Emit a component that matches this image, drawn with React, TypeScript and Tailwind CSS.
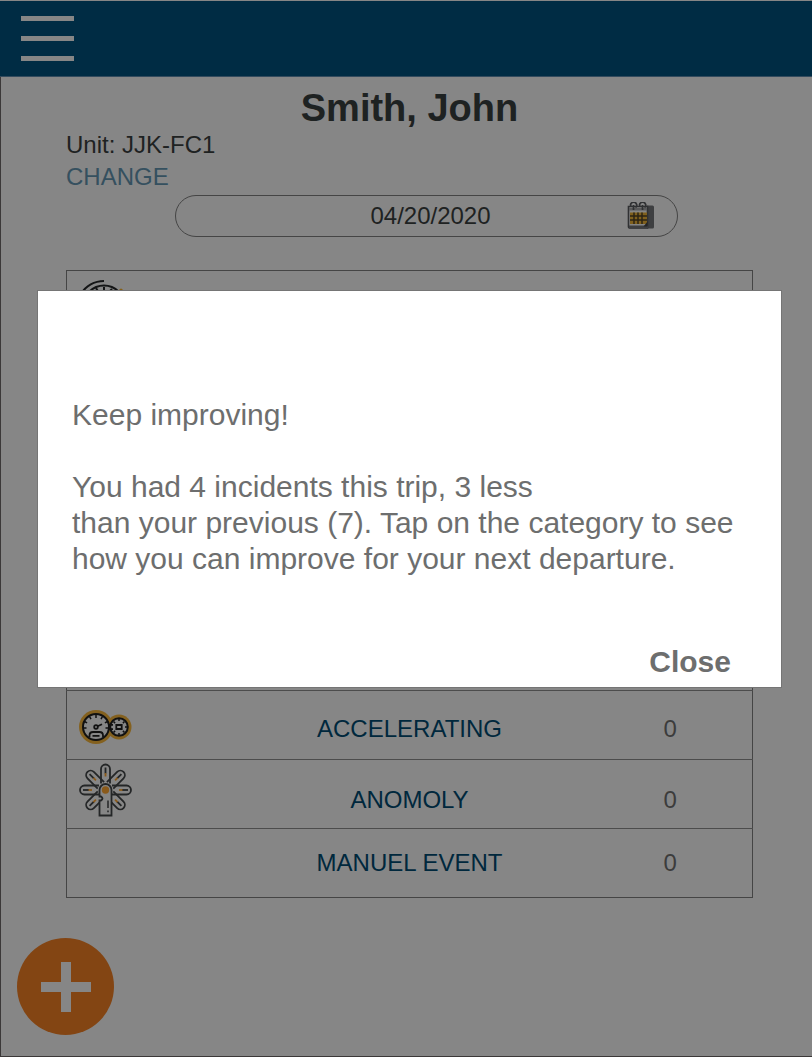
import { useState } from "react";
import type { ReactNode } from "react";

const SPOKES = [0, 45, 90, 135, 225, 270, 315];

function DialIcon() {
  return (
    <svg width="54" height="54" viewBox="0 0 54 54" fill="none" aria-hidden="true">
      <path d="M2 15A27 27 0 0 1 25 2" stroke="#141516" strokeWidth="2.200" />
      <circle cx="25" cy="27" r="20.500" stroke="#141516" strokeWidth="2.200" />
      <path d="M25 8v3M17 9l3 5M33 10l-2 2M11 13l4 4" stroke="#141516" strokeWidth="2" />
      <path d="M40 11q2-3 4 0v3h-3z" fill="#855f16" />
    </svg>
  );
}

function GaugesIcon() {
  return (
    <svg width="54" height="36" viewBox="0 0 54 36" fill="none" aria-hidden="true">
      <circle cx="17" cy="18" r="17" fill="#84611f" />
      <circle cx="40" cy="18" r="12.500" fill="#84611f" />
      <circle cx="40" cy="18" r="8.800" fill="#868686" stroke="#111" strokeWidth="2" />
      <circle cx="17" cy="18" r="13" fill="#868686" stroke="#111" strokeWidth="2" />
      <path
        d="M17 6v3M10.500 7.500l1.500 2.600M23.500 7.500l-1.500 2.600M5.500 12.500l2.600 1.300M28.500 12.500l-2.600 1.300M4.500 19h3M29.500 19h-3"
        stroke="#111"
        strokeWidth="1.500"
      />
      <circle cx="17" cy="18" r="1.800" stroke="#111" strokeWidth="1.800" />
      <path d="M18.500 17.300l4.500-2" stroke="#111" strokeWidth="1.800" />
      <path
        d="M10.500 28v-1.500q0-3.500 3.500-3.500h6.500q3.500 0 3.500 3.500V28M13.500 26.800h7"
        stroke="#111"
        strokeWidth="1.800"
      />
      <path d="M29 15.800h5M29 20.200h5" stroke="#111" strokeWidth="1.800" />
      <path
        d="M40 9.500v2.500M40 26.500V24M46 18h2.500M34.500 12.500l1.600 1.600M45.500 12.500l-1.600 1.600M34.500 23.500l1.600-1.600M45.500 23.500l-1.600-1.600"
        stroke="#111"
        strokeWidth="1.500"
      />
      <path d="M37.300 16h5.400v4h-5.400z" stroke="#111" strokeWidth="1.800" />
    </svg>
  );
}

function BurstIcon() {
  return (
    <svg width="54" height="54" viewBox="0 0 54 54" fill="none" aria-hidden="true">
      {SPOKES.map((angle) => (
        <g key={angle} transform={`rotate(${angle} 26.500 27)`}>
          <path d="M22 20.500V6a4.500 4.500 0 0 1 9 0v14.500" stroke="#242627" strokeWidth="1.800" />
          <path d="M26.500 4.500v6" stroke="#242627" strokeWidth="1.800" />
          <path d="M26.500 10v3.500" stroke="#8a5a1b" strokeWidth="1.800" />
        </g>
      ))}
      <path
        d="M20.500 52.500V37.500h1.500q3-2 0-4h-1.500V27a6 6 0 0 1 12 0v25.500z"
        fill="#868686"
        stroke="#242627"
        strokeWidth="1.800"
      />
      <circle cx="26.500" cy="27" r="3.700" fill="#8a5a1b" />
      <path d="M29 37.500v7.500M29 47.500v1.800" stroke="#242627" strokeWidth="1.500" />
    </svg>
  );
}

function CalendarIcon() {
  return (
    <svg width="28" height="28" viewBox="0 0 28 28" fill="none" aria-hidden="true">
      <path d="M20 3.500h5.500q1.500 0 1.500 1.500v20q0 1.500-1.500 1.500H20z" fill="#3e3f41" />
      <path d="M1.500 4.500h19V26h-18q-1 0-1-1z" fill="#858585" stroke="#303133" strokeWidth="1.600" />
      <path d="M2 6h18v2.500H2z" fill="#5a5a5b" />
      <path d="M2 23.500h19v3H2z" fill="#3e3f41" />
      <path d="M3 10.500h17v11.500H3z" fill="#80601d" />
      <path d="M7 10.500v11.500M11 10.500v11.500M15 10.500v11.500M3 14h17M3 18h17" stroke="#2c2415" strokeWidth="1.500" />
      <path
        d="M4 4.500a3 3 0 1 1 4.500 1M13 4.500a3 3 0 1 1 4.500 1M6.500 3v5M15.500 3v5"
        stroke="#303133"
        strokeWidth="1.700"
      />
      <path d="M20.500 19.500l-4 5h4z" fill="#242527" />
    </svg>
  );
}

type RowProps = { icon?: ReactNode; label: string; count: number; labelPad?: string; iconPad?: string };

function CategoryRow({ icon, label, count, labelPad = "pt-0", iconPad = "pt-0" }: RowProps) {
  return (
    <tr className="h-[69px] border-t border-[#4c4c4c]">
      <td className={`${iconPad} pl-3 align-middle`}>{icon}</td>
      <td className={`${labelPad} text-center text-[#00283d]`}>{label}</td>
      <td className={`${labelPad} pl-[2px] text-center text-[#3c3c3c]`}>{count}</td>
    </tr>
  );
}

export default function App() {
  const [open, setOpen] = useState(true);
  return (
    <div className="flex min-h-screen flex-col bg-[#868686] font-['Liberation_Sans',Arial,sans-serif] text-[24px] leading-8 text-[#1e2222]">
      <header className="flex h-[77px] items-start border-b border-t border-b-[#334b5e] border-t-[#868686] bg-[#002c44] px-[21px] pt-[15px]">
        <button type="button" aria-label="Menu" className="flex w-[53px] flex-col gap-[15px]">
          <span className="h-[5px] w-full bg-[#868686]" />
          <span className="h-[5px] w-full bg-[#868686]" />
          <span className="h-[5px] w-full bg-[#868686]" />
        </button>
      </header>

      <main className="flex grow flex-col border-b border-l border-[#3b3838]">
        <div className="pl-[65px] pr-[59px] pt-[10px]">
          <h1 className="text-center text-[38px] font-bold leading-[42px]">Smith, John</h1>
          <p>Unit: JJK-FC1</p>
          <a href="#change" className="block w-fit text-[#35505f]">
            CHANGE
          </a>
          <div className="mt-[2px] flex pl-[109px] pr-[75px]">
            <button
              type="button"
              aria-label="Date 04/20/2020"
              className="flex h-[42px] grow items-center rounded-full border border-[#454545] pl-[58px] pr-[22px]"
            >
              <span className="grow text-center">04/20/2020</span>
              <CalendarIcon />
            </button>
          </div>

          <table className="mt-[33px] w-full table-fixed border-collapse border border-[#454545]">
            <colgroup>
              <col className="w-[166px]" />
              <col />
              <col className="w-[166px]" />
            </colgroup>
            <tbody>
              <tr className="h-[420px]">
                <td className="pl-3 pt-2 align-top">
                  <DialIcon />
                </td>
                <td />
                <td />
              </tr>
              <CategoryRow icon={<GaugesIcon />} label="ACCELERATING" count={0} labelPad="pt-2" iconPad="pt-1" />
              <CategoryRow icon={<BurstIcon />} label="ANOMOLY" count={0} labelPad="pt-3" iconPad="pb-2" />
              <CategoryRow label="MANUEL EVENT" count={0} />
            </tbody>
          </table>
        </div>

        <button
          type="button"
          aria-label="Add"
          className="mb-[21px] ml-4 mt-auto flex size-[97px] items-center justify-center rounded-full bg-[#834513]"
        >
          <svg width="50" height="50" viewBox="0 0 50 50" aria-hidden="true">
            <path d="M20 0h10v20h20v10H30v20H20V30H0V20h20z" fill="#868686" />
          </svg>
        </button>
      </main>

      {open && (
        <div className="absolute inset-0 flex items-start pl-[37px] pr-[30px] pt-[290px]">
          <div
            role="dialog"
            aria-modal="true"
            aria-label="Keep improving!"
            className="flex min-h-[398px] w-full flex-col border border-[#757575] bg-white pb-[7px] pl-[34px] pr-[42px] pt-[106px] text-[30px] leading-9 text-[#6d6e6e]"
          >
            <p>Keep improving!</p>
            <p className="mt-9">
              You had 4 incidents this trip, 3 less
              <br />
              than your previous (7). Tap on the category to see how you can improve for your next departure.
            </p>
            <button type="button" onClick={() => setOpen(false)} className="ml-auto mr-2 mt-auto font-bold">
              Close
            </button>
          </div>
        </div>
      )}
    </div>
  );
}
